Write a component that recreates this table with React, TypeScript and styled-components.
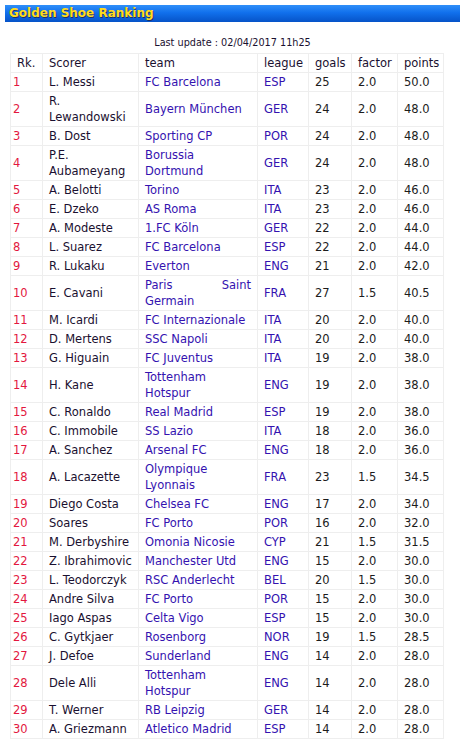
import styled, { createGlobalStyle } from 'styled-components';

const GlobalStyle = createGlobalStyle`
  body {
    margin: 0;
    background: #ffffff;
    font-family: 'DejaVu Sans', Verdana, sans-serif;
  }
`;

const Page = styled.div`
  padding: 5px 0 0 5px;
`;

const TitleBar = styled.div`
  height: 17px;
  padding-left: 4px;
  background: linear-gradient(to bottom, #2f8ff9 0%, #1170ec 45%, #0653c8 100%);
  color: #ffdc1e;
  font-size: 12px;
  font-weight: bold;
  line-height: 17px;
  text-shadow: 1px 1px 0 rgba(40, 30, 60, 0.75);
`;

const Updated = styled.div`
  margin: 14px 0 4px;
  text-align: center;
  font-size: 9.7px;
  line-height: 13px;
  color: #1a1030;
`;

const Table = styled.table`
  margin-left: 5px;
  width: 433px;
  table-layout: fixed;
  border-collapse: collapse;
  font-size: 11.5px;
  line-height: 16px;
`;

const Th = styled.th`
  padding: 1px 6px;
  border: 1px solid #eeeeee;
  font-weight: normal;
  text-align: left;
  color: #1a1030;
`;

type Tone = 'rank' | 'name' | 'club' | 'num';

const tones: Record<Tone, string> = {
  rank: '#e3173e',
  name: '#1a1030',
  club: '#3412b0',
  num: '#1c1c1c',
};

const Td = styled.td<{ $tone: Tone }>`
  padding: 1px 6px;
  padding-left: ${(p) => (p.$tone === 'rank' ? '2px' : '6px')};
  border: 1px solid #eeeeee;
  vertical-align: middle;
  text-align: ${(p) => (p.$tone === 'num' || p.$tone === 'rank' ? 'left' : 'justify')};
  color: ${(p) => tones[p.$tone]};
`;

interface Row {
  scorer: string;
  team: string;
  league: string;
  goals: number;
  factor: string;
  points: string;
}

const rows: Row[] = [
  { scorer: 'L. Messi', team: 'FC Barcelona', league: 'ESP', goals: 25, factor: '2.0', points: '50.0' },
  { scorer: 'R. Lewandowski', team: 'Bayern München', league: 'GER', goals: 24, factor: '2.0', points: '48.0' },
  { scorer: 'B. Dost', team: 'Sporting CP', league: 'POR', goals: 24, factor: '2.0', points: '48.0' },
  { scorer: 'P.E. Aubameyang', team: 'Borussia Dortmund', league: 'GER', goals: 24, factor: '2.0', points: '48.0' },
  { scorer: 'A. Belotti', team: 'Torino', league: 'ITA', goals: 23, factor: '2.0', points: '46.0' },
  { scorer: 'E. Dzeko', team: 'AS Roma', league: 'ITA', goals: 23, factor: '2.0', points: '46.0' },
  { scorer: 'A. Modeste', team: '1.FC Köln', league: 'GER', goals: 22, factor: '2.0', points: '44.0' },
  { scorer: 'L. Suarez', team: 'FC Barcelona', league: 'ESP', goals: 22, factor: '2.0', points: '44.0' },
  { scorer: 'R. Lukaku', team: 'Everton', league: 'ENG', goals: 21, factor: '2.0', points: '42.0' },
  { scorer: 'E. Cavani', team: 'Paris Saint Germain', league: 'FRA', goals: 27, factor: '1.5', points: '40.5' },
  { scorer: 'M. Icardi', team: 'FC Internazionale', league: 'ITA', goals: 20, factor: '2.0', points: '40.0' },
  { scorer: 'D. Mertens', team: 'SSC Napoli', league: 'ITA', goals: 20, factor: '2.0', points: '40.0' },
  { scorer: 'G. Higuain', team: 'FC Juventus', league: 'ITA', goals: 19, factor: '2.0', points: '38.0' },
  { scorer: 'H. Kane', team: 'Tottenham Hotspur', league: 'ENG', goals: 19, factor: '2.0', points: '38.0' },
  { scorer: 'C. Ronaldo', team: 'Real Madrid', league: 'ESP', goals: 19, factor: '2.0', points: '38.0' },
  { scorer: 'C. Immobile', team: 'SS Lazio', league: 'ITA', goals: 18, factor: '2.0', points: '36.0' },
  { scorer: 'A. Sanchez', team: 'Arsenal FC', league: 'ENG', goals: 18, factor: '2.0', points: '36.0' },
  { scorer: 'A. Lacazette', team: 'Olympique Lyonnais', league: 'FRA', goals: 23, factor: '1.5', points: '34.5' },
  { scorer: 'Diego Costa', team: 'Chelsea FC', league: 'ENG', goals: 17, factor: '2.0', points: '34.0' },
  { scorer: 'Soares', team: 'FC Porto', league: 'POR', goals: 16, factor: '2.0', points: '32.0' },
  { scorer: 'M. Derbyshire', team: 'Omonia Nicosie', league: 'CYP', goals: 21, factor: '1.5', points: '31.5' },
  { scorer: 'Z. Ibrahimovic', team: 'Manchester Utd', league: 'ENG', goals: 15, factor: '2.0', points: '30.0' },
  { scorer: 'L. Teodorczyk', team: 'RSC Anderlecht', league: 'BEL', goals: 20, factor: '1.5', points: '30.0' },
  { scorer: 'Andre Silva', team: 'FC Porto', league: 'POR', goals: 15, factor: '2.0', points: '30.0' },
  { scorer: 'Iago Aspas', team: 'Celta Vigo', league: 'ESP', goals: 15, factor: '2.0', points: '30.0' },
  { scorer: 'C. Gytkjaer', team: 'Rosenborg', league: 'NOR', goals: 19, factor: '1.5', points: '28.5' },
  { scorer: 'J. Defoe', team: 'Sunderland', league: 'ENG', goals: 14, factor: '2.0', points: '28.0' },
  { scorer: 'Dele Alli', team: 'Tottenham Hotspur', league: 'ENG', goals: 14, factor: '2.0', points: '28.0' },
  { scorer: 'T. Werner', team: 'RB Leipzig', league: 'GER', goals: 14, factor: '2.0', points: '28.0' },
  { scorer: 'A. Griezmann', team: 'Atletico Madrid', league: 'ESP', goals: 14, factor: '2.0', points: '28.0' },
];

const columns = [
  { label: 'Rk.', width: 32 },
  { label: 'Scorer', width: 96 },
  { label: 'team', width: 119 },
  { label: 'league', width: 51 },
  { label: 'goals', width: 43 },
  { label: 'factor', width: 46 },
  { label: 'points', width: 46 },
];

const App = () => (
  <Page>
    <GlobalStyle />
    <TitleBar>Golden Shoe Ranking</TitleBar>
    <Updated>Last update : 02/04/2017 11h25</Updated>
    <Table>
      <colgroup>
        {columns.map((c) => (
          <col key={c.label} style={{ width: c.width }} />
        ))}
      </colgroup>
      <thead>
        <tr>
          {columns.map((c) => (
            <Th key={c.label}>{c.label}</Th>
          ))}
        </tr>
      </thead>
      <tbody>
        {rows.map((r, i) => (
          <tr key={r.scorer}>
            <Td $tone="rank">{i + 1}</Td>
            <Td $tone="name">{r.scorer}</Td>
            <Td $tone="club">{r.team}</Td>
            <Td $tone="club">{r.league}</Td>
            <Td $tone="num">{r.goals}</Td>
            <Td $tone="num">{r.factor}</Td>
            <Td $tone="num">{r.points}</Td>
          </tr>
        ))}
      </tbody>
    </Table>
  </Page>
);

export default App;
